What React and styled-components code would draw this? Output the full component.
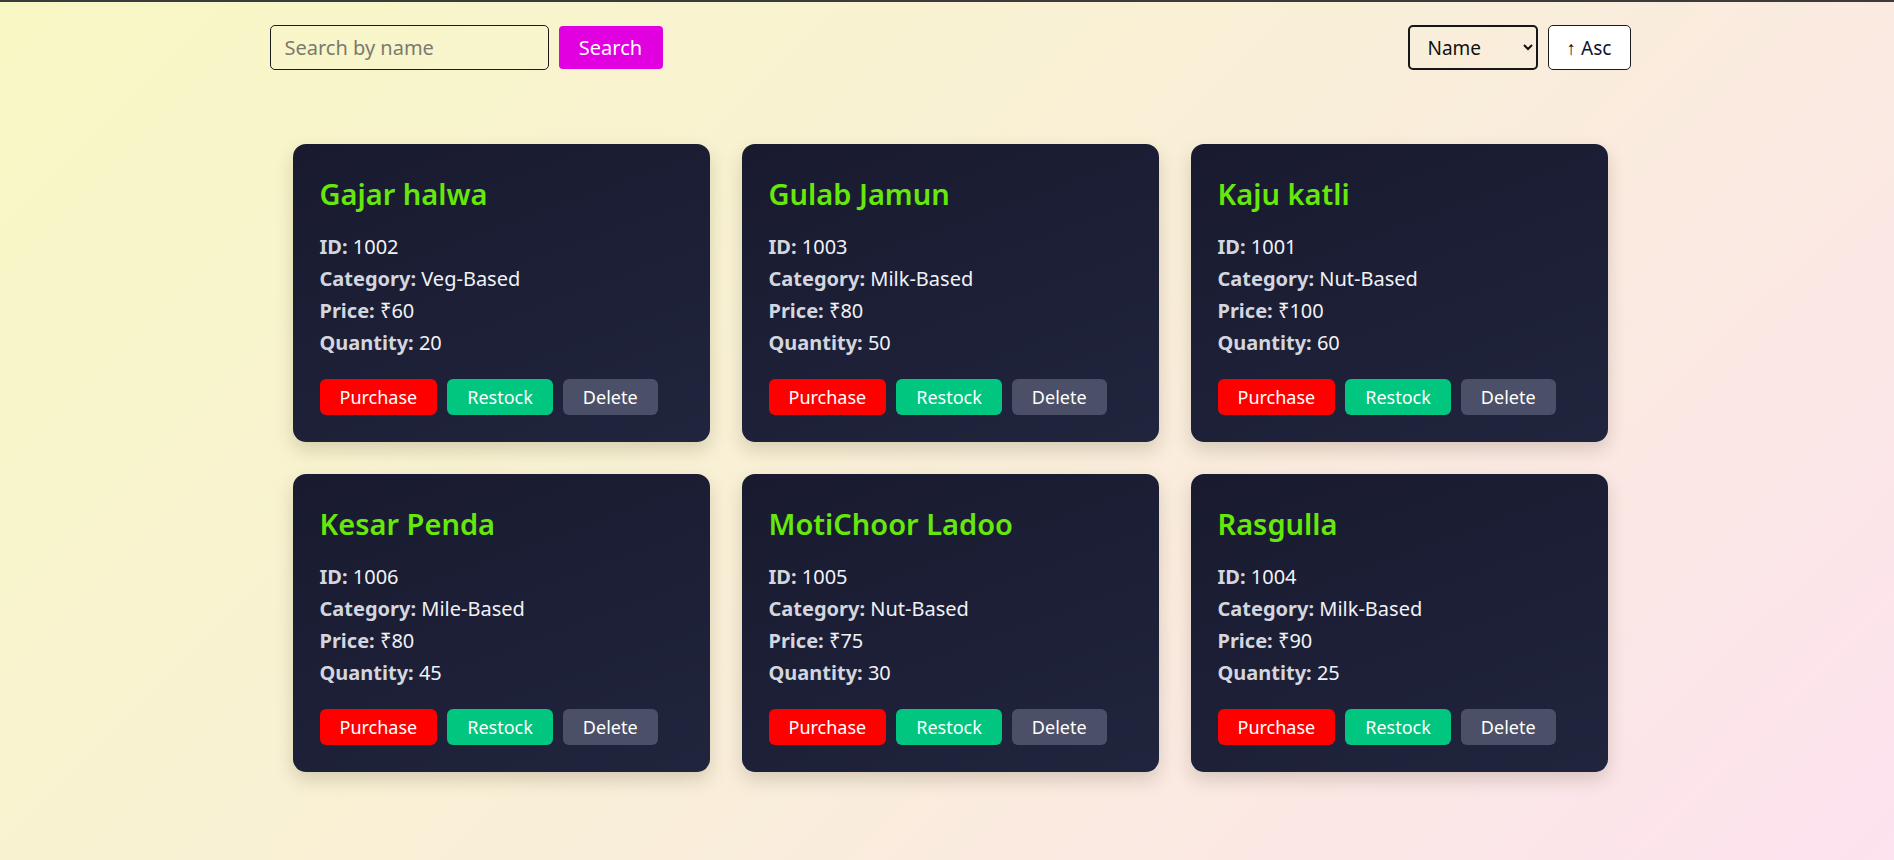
import React from "react";
import styled, { createGlobalStyle } from "styled-components";

const GlobalStyle = createGlobalStyle`
  html, body {
    margin: 0;
    padding: 0;
  }
  body {
    font-family: "Noto Sans", "Open Sans", sans-serif;
    min-height: 100vh;
    background: linear-gradient(135deg, #f8f8c4 0%, #f9efd8 50%, #fde2ef 100%);
    border-top: 2px solid #3b3b3b;
    box-sizing: border-box;
  }
  * {
    box-sizing: border-box;
  }
`;

const Page = styled.div`
  max-width: 1367px;
  margin: 0 auto;
  padding: 23px 0 40px 6px;
`;

const Toolbar = styled.div`
  display: flex;
  justify-content: space-between;
  align-items: center;
`;

const Group = styled.div`
  display: flex;
  align-items: center;
  gap: 10px;
`;

const SearchInput = styled.input`
  width: 279px;
  height: 45px;
  padding: 0 14px;
  font-family: inherit;
  font-size: 20px;
  color: #222;
  background: transparent;
  border: 1px solid #1c1c1c;
  border-radius: 5px;
  outline: none;

  &::placeholder {
    color: #7a7a70;
  }
`;

const SearchButton = styled.button`
  width: 104px;
  height: 43px;
  font-family: inherit;
  font-size: 20px;
  color: #fff;
  background: #e000e0;
  border: none;
  border-radius: 4px;
  cursor: pointer;
`;

const SortSelect = styled.select`
  width: 130px;
  height: 45px;
  padding: 0 10px 0 14px;
  font-family: inherit;
  font-size: 19px;
  color: #111;
  background: transparent;
  border: 2px solid #161616;
  border-radius: 5px;
`;

const OrderButton = styled.button`
  width: 83px;
  height: 45px;
  font-family: inherit;
  font-size: 19px;
  color: #0c1530;
  background: #fff;
  border: 1px solid #1c1c1c;
  border-radius: 5px;
  cursor: pointer;
`;

const Grid = styled.div`
  display: grid;
  grid-template-columns: repeat(3, 417px);
  justify-content: center;
  column-gap: 32px;
  row-gap: 32px;
  margin-top: 74px;
`;

const Card = styled.div`
  padding: 28px 27px 27px 27px;
  border-radius: 13px;
  background: linear-gradient(160deg, #191a2f 0%, #1c1f36 50%, #20253d 100%);
  box-shadow: 0 8px 18px rgba(60, 50, 20, 0.18);
`;

const Title = styled.h2`
  margin: 0 0 15px;
  font-size: 29px;
  line-height: 44px;
  font-weight: 600;
  color: #66e80c;
`;

const Detail = styled.p`
  margin: 0;
  font-size: 20px;
  line-height: 32px;
  color: #f1f2f6;
`;

const Label = styled.strong`
  font-weight: 700;
  color: #d3d6df;
`;

const Actions = styled.div`
  display: flex;
  gap: 10px;
  margin-top: 20px;
`;

const palette = {
  purchase: "#ff0000",
  restock: "#00c67f",
  delete: "#4b5068",
};

const ActionButton = styled.button`
  height: 36px;
  padding: 0 20px;
  font-family: inherit;
  font-size: 18px;
  color: #fff;
  background: ${(p) => palette[p.$kind]};
  border: none;
  border-radius: 6px;
  cursor: pointer;
`;

const sweets = [
  { id: 1002, name: "Gajar halwa", category: "Veg-Based", price: 60, qty: 20 },
  { id: 1003, name: "Gulab Jamun", category: "Milk-Based", price: 80, qty: 50 },
  { id: 1001, name: "Kaju katli", category: "Nut-Based", price: 100, qty: 60 },
  { id: 1006, name: "Kesar Penda", category: "Mile-Based", price: 80, qty: 45 },
  { id: 1005, name: "MotiChoor Ladoo", category: "Nut-Based", price: 75, qty: 30 },
  { id: 1004, name: "Rasgulla", category: "Milk-Based", price: 90, qty: 25 },
];

export default function App() {
  return (
    <>
      <GlobalStyle />
      <Page>
        <Toolbar>
          <Group>
            <SearchInput placeholder="Search by name" />
            <SearchButton>Search</SearchButton>
          </Group>
          <Group>
            <SortSelect defaultValue="name">
              <option value="name">Name</option>
              <option value="price">Price</option>
              <option value="quantity">Quantity</option>
            </SortSelect>
            <OrderButton>↑ Asc</OrderButton>
          </Group>
        </Toolbar>

        <Grid>
          {sweets.map((s) => (
            <Card key={s.id}>
              <Title>{s.name}</Title>
              <Detail>
                <Label>ID:</Label> {s.id}
              </Detail>
              <Detail>
                <Label>Category:</Label> {s.category}
              </Detail>
              <Detail>
                <Label>Price:</Label> ₹{s.price}
              </Detail>
              <Detail>
                <Label>Quantity:</Label> {s.qty}
              </Detail>
              <Actions>
                <ActionButton $kind="purchase">Purchase</ActionButton>
                <ActionButton $kind="restock">Restock</ActionButton>
                <ActionButton $kind="delete">Delete</ActionButton>
              </Actions>
            </Card>
          ))}
        </Grid>
      </Page>
    </>
  );
}
